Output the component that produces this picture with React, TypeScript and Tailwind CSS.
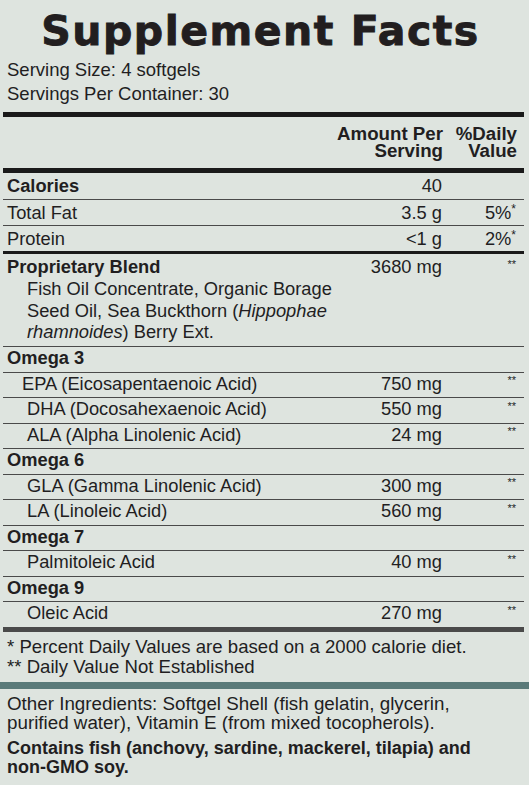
import React from "react"

type Row = { label: string; amount?: string; dv?: string; bold?: boolean; indent?: string }

const topRows: Row[] = [
  { label: "Calories", amount: "40", bold: true },
  { label: "Total Fat", amount: "3.5 g", dv: "5%*" },
  { label: "Protein", amount: "<1 g", dv: "2%*" },
]

const omegaRows: Row[] = [
  { label: "Omega 3", bold: true },
  { label: "EPA (Eicosapentaenoic Acid)", amount: "750 mg", dv: "**", indent: "pl-[19px]" },
  { label: "DHA (Docosahexaenoic Acid)", amount: "550 mg", dv: "**", indent: "pl-[24px]" },
  { label: "ALA (Alpha Linolenic Acid)", amount: "24 mg", dv: "**", indent: "pl-[24px]" },
  { label: "Omega 6", bold: true },
  { label: "GLA (Gamma Linolenic Acid)", amount: "300 mg", dv: "**", indent: "pl-[24px]" },
  { label: "LA (Linoleic Acid)", amount: "560 mg", dv: "**", indent: "pl-[24px]" },
  { label: "Omega 7", bold: true },
  { label: "Palmitoleic Acid", amount: "40 mg", dv: "**", indent: "pl-[24px]" },
  { label: "Omega 9", bold: true },
  { label: "Oleic Acid", amount: "270 mg", dv: "**", indent: "pl-[24px]" },
]

function DailyValue({ dv }: { dv?: string }) {
  if (!dv) return null
  if (dv === "**") return <sup className="text-[11px]">**</sup>
  return (
    <>
      {dv.replace("*", "")}
      <sup className="text-[12px]">*</sup>
    </>
  )
}

function FactRow({ row, className }: { row: Row; className: string }) {
  return (
    <div className={`flex border-b border-[#4a4a4a] pr-[8px] leading-[22px] ${className}`}>
      <div className={`flex-1 ${row.indent ?? "pl-[4px]"} ${row.bold ? "font-bold" : ""}`}>{row.label}</div>
      <div className="w-[120px] text-right">{row.amount}</div>
      <div className="w-[74px] text-right">
        <DailyValue dv={row.dv} />
      </div>
    </div>
  )
}

export default function App() {
  return (
    <div
      className="min-h-[785px] w-full bg-[#dee4df] text-[#221e1f]"
      style={{ fontFamily: '"Liberation Sans", Arial, sans-serif' }}
    >
      <div className="pl-[3px] pr-[5px]">
        <h1
          className="pt-[11px] pr-[6px] text-center text-[41px] font-bold leading-none tracking-[1.5px] [-webkit-text-stroke:0.9px_#221e1f]"
          style={{ fontFamily: '"DejaVu Sans", sans-serif' }}
        >
          Supplement Facts
        </h1>

        <div className="pt-[6px] pl-[4px] text-[18.5px] leading-[23.5px]">
          <p>Serving Size: 4 softgels</p>
          <p>Servings Per Container: 30</p>
        </div>

        <div className="mt-[7px] border-t-[5px] border-b-[5px] border-[#1a1a1a] h-[61px] pt-[8px] pr-[7px] flex text-[18.7px] font-bold leading-[17px]">
          <div className="flex-1" />
          <div className="w-[120px] text-right">
            Amount Per
            <br />
            Serving
          </div>
          <div className="w-[74px] text-right">
            %Daily
            <br />
            Value
          </div>
        </div>

        <div className="text-[18.3px]">
          <FactRow row={topRows[0]} className="h-[27px] pt-[2px]" />
          <FactRow row={topRows[1]} className="h-[26px] pt-[2px]" />
          <div className="flex h-[28px] border-b-[3px] border-[#1a1a1a] pt-[2px] pr-[8px] leading-[22px]">
            <div className="flex-1 pl-[4px]">Protein</div>
            <div className="w-[120px] text-right">&lt;1 g</div>
            <div className="w-[74px] text-right">
              <DailyValue dv="2%*" />
            </div>
          </div>

          <div className="flex h-[93px] border-b border-[#4a4a4a] pt-[2px] pr-[8px]">
            <div className="flex-1">
              <div className="pl-[4px] font-bold leading-[22px]">Proprietary Blend</div>
              <div className="whitespace-nowrap pl-[24px] leading-[21.5px]">
                Fish Oil Concentrate, Organic Borage
                <br />
                Seed Oil, Sea Buckthorn (<i>Hippophae</i>
                <br />
                <i>rhamnoides</i>) Berry Ext.
              </div>
            </div>
            <div className="w-[100px] text-right leading-[22px]">3680 mg</div>
            <div className="w-[74px] text-right leading-[22px]">
              <DailyValue dv="**" />
            </div>
          </div>

          {omegaRows.map((row, i) => (
            <FactRow
              key={row.label}
              row={row}
              className={i === omegaRows.length - 1 ? "h-[30px] border-b-[5px] border-[#1a1a1a]" : "h-[25.5px]"}
            />
          ))}
        </div>

        <div className="pt-[5px] pl-[4px] text-[18.6px] leading-[20px]">
          <p>* Percent Daily Values are based on a 2000 calorie diet.</p>
          <p>** Daily Value Not Established</p>
        </div>
      </div>

      <div className="mt-[5px] h-[7px] bg-[#5a7a79]" />

      <div className="pl-[7px] pr-[5px] pt-[5px] leading-[19px]">
        <p className="text-[18.8px]">
          Other Ingredients: Softgel Shell (fish gelatin, glycerin,
          <br />
          purified water), Vitamin E (from mixed tocopherols).
        </p>
        <p className="mt-[7px] text-[18px] font-bold">
          Contains fish (anchovy, sardine, mackerel, tilapia) and
          <br />
          non-GMO soy.
        </p>
      </div>
    </div>
  )
}
